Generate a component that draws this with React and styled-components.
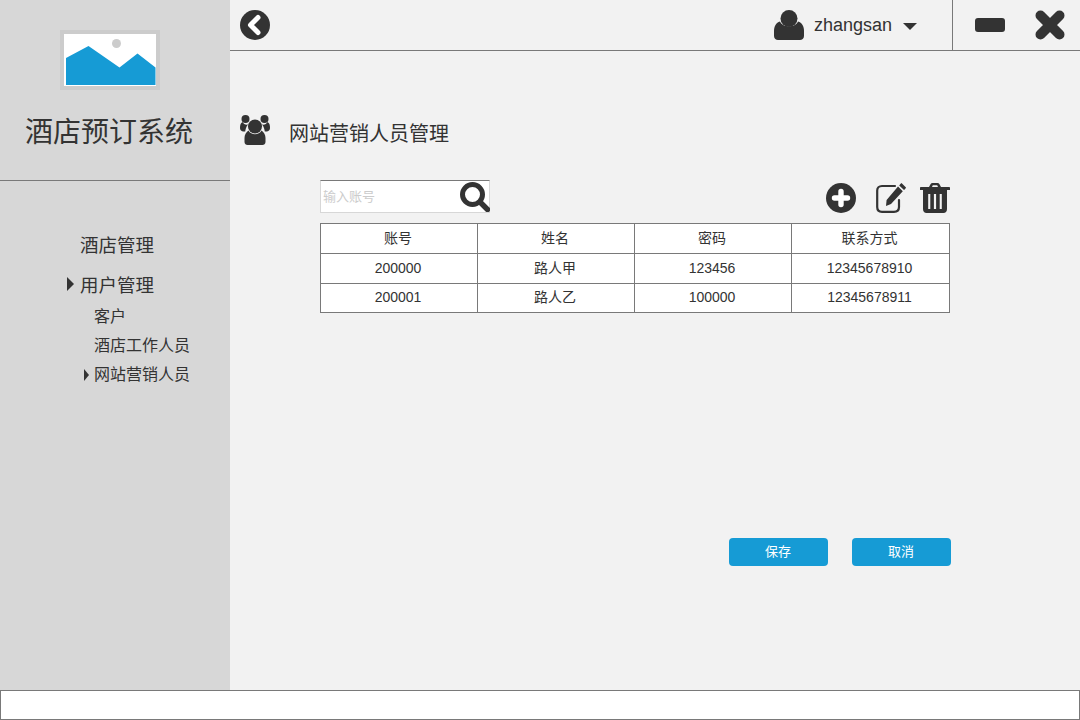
import React from 'react';
import styled, { createGlobalStyle } from 'styled-components';

const rows = [
	['200000', '路人甲', '123456', '12345678910'],
	['200001', '路人乙', '100000', '12345678911'],
];

function App() {
	return (
		<>
			<GlobalStyle />
			<Page>
				<Body>
					<Sidebar>
						<Brand>
							<Logo width='100' height='60' viewBox='0 0 100 60'>
								<rect width='100' height='60' fill='#ccc' />
								<rect x='4' y='4' width='92' height='52' fill='#fff' />
								<circle cx='56.5' cy='13.5' r='4.5' fill='#ccc' />
								<polygon points='6,28 28.5,16 59.5,37.5 77.5,23.5 95.5,37.5 95.5,55 6,55' fill='#169bd5' />
							</Logo>
							<BrandName>酒店预订系统</BrandName>
						</Brand>
						<Menu>
							<MenuItem>酒店管理</MenuItem>
							<MenuItem $active>用户管理</MenuItem>
							<SubMenu>
								<SubItem>客户</SubItem>
								<SubItem>酒店工作人员</SubItem>
								<SubItem $active>网站营销人员</SubItem>
							</SubMenu>
						</Menu>
					</Sidebar>
					<Main>
						<TopBar>
							<BackIcon />
							<UserArea>
								<UserIcon />
								<UserName>zhangsan</UserName>
								<Caret />
							</UserArea>
							<WindowControls>
								<MinimizeButton />
								<CloseIcon />
							</WindowControls>
						</TopBar>
						<Heading>
							<UsersIcon />
							<HeadingText>网站营销人员管理</HeadingText>
						</Heading>
						<Panel>
							<Toolbar>
								<SearchBox>
									<SearchText>输入账号</SearchText>
									<SearchIcon />
								</SearchBox>
								<Actions>
									<PlusIcon />
									<EditIcon />
									<TrashIcon />
								</Actions>
							</Toolbar>
							<Table>
								<colgroup>
									<col width='157' />
									<col width='157' />
									<col width='157' />
									<col width='158' />
								</colgroup>
								<thead>
									<tr>
										<Cell as='th'>账号</Cell>
										<Cell as='th'>姓名</Cell>
										<Cell as='th'>密码</Cell>
										<Cell as='th'>联系方式</Cell>
									</tr>
								</thead>
								<tbody>
									{rows.map((row) => (
										<tr key={row[0]}>
											{row.map((value) => (
												<Cell key={value}>{value}</Cell>
											))}
										</tr>
									))}
								</tbody>
							</Table>
							<Buttons>
								<Button>保存</Button>
								<Button>取消</Button>
							</Buttons>
						</Panel>
					</Main>
				</Body>
				<Footer />
			</Page>
		</>
	);
}

function BackIcon() {
	return (
		<svg width='30' height='30' viewBox='0 0 30 30'>
			<circle cx='15' cy='15' r='15' fill='#333' />
			<polyline points='18,7.5 10.5,15 18,22.5' fill='none' stroke='#fff' strokeWidth='5' strokeLinejoin='round' strokeLinecap='round' />
		</svg>
	);
}

function UserIcon() {
	return (
		<svg width='30' height='30' viewBox='0 0 30 30'>
			<circle cx='15' cy='8.5' r='8.5' fill='#333' />
			<path d='M6 11.5 C9 18 21 18 24 11.5 C28 12.5 30 16.5 30 21 L30 26 C30 28.5 28 30 26 30 L4 30 C2 30 0 28.5 0 26 L0 21 C0 16.5 2 12.5 6 11.5 Z' fill='#333' />
		</svg>
	);
}

function CloseIcon() {
	return (
		<svg width='30' height='30' viewBox='0 0 30 30'>
			<path d='M5.5 5.5 L24.5 24.5 M24.5 5.5 L5.5 24.5' stroke='#333' strokeWidth='10' strokeLinecap='round' />
		</svg>
	);
}

function UsersIcon() {
	return (
		<svg width='30' height='30' viewBox='0 0 30 30'>
			<g fill='#333'>
				<circle cx='5.5' cy='4' r='4' />
				<circle cx='24.5' cy='4' r='4' />
				<path d='M2.5 7 C0.5 8 0 10 0 13 C0 15 1 16 3 16.5 L5.2 16.5 C5.5 14.5 6 12 8 9.5 C5.5 10 3.5 9 2.5 7 Z' />
				<path d='M27.5 7 C29.5 8 30 10 30 13 C30 15 29 16 27 16.5 L24.8 16.5 C24.5 14.5 24 12 22 9.5 C24.5 10 26.5 9 27.5 7 Z' />
				<circle cx='15' cy='11.5' r='7' />
				<path d='M8.5 15.5 C11 20.5 19 20.5 21.5 15.5 C24 17 25.5 20 25.5 23 L25.5 27 C25.5 29 24 30 22.5 30 L7.5 30 C6 30 4.5 29 4.5 27 L4.5 23 C4.5 20 6 17 8.5 15.5 Z' />
			</g>
		</svg>
	);
}

function SearchIcon() {
	return (
		<svg width='30' height='30' viewBox='0 0 30 30'>
			<circle cx='12.5' cy='12.5' r='10' fill='none' stroke='#333' strokeWidth='5' />
			<path d='M20.5 20.5 L27.5 27.5' stroke='#333' strokeWidth='5.4' strokeLinecap='round' />
		</svg>
	);
}

function PlusIcon() {
	return (
		<svg width='30' height='30' viewBox='0 0 30 30'>
			<circle cx='15' cy='15' r='15' fill='#333' />
			<path d='M15 8.5 L15 21.5 M8.5 15 L21.5 15' stroke='#fff' strokeWidth='5.4' strokeLinecap='round' />
		</svg>
	);
}

function EditIcon() {
	return (
		<svg width='30' height='30' viewBox='0 0 30 30'>
			<path d='M19 3 L6 3 C3 3 1.2 5 1.2 7.5 L1.2 24 C1.2 27 3 28.8 6 28.8 L18 28.8 C21 28.8 23 27 23 24 L23 17' fill='none' stroke='#333' strokeWidth='2.2' strokeLinecap='round' />
			<path d='M25.5 0 L30 4.5 C30 5.2 28.8 6.4 28 7 L23.2 2.4 C24 1.5 24.8 0.6 25.5 0 Z M22 3.6 L26.8 8.2 L15 21 L10 23 L10.6 17 Z' fill='#333' />
		</svg>
	);
}

function TrashIcon() {
	return (
		<svg width='30' height='30' viewBox='0 0 30 30'>
			<path fillRule='evenodd' fill='#333' d='M9 4 L10.5 1.2 C11 0.4 11.6 0 12.5 0 L17.5 0 C18.4 0 19 0.4 19.5 1.2 L21 4 L29 4 C29.6 4 30 4.4 30 5 L30 7 L0 7 L0 5 C0 4.4 0.4 4 1 4 Z M12 4 L18 4 L17.2 2.2 L12.8 2.2 Z M3 7 L27 7 L27 26 C27 28.5 25.5 30 23.5 30 L6.5 30 C4.5 30 3 28.5 3 26 Z M8.2 11 L8.2 26 L10.3 26 L10.3 11 Z M13.9 11 L13.9 26 L16.1 26 L16.1 11 Z M19.7 11 L19.7 26 L21.8 26 L21.8 11 Z' />
		</svg>
	);
}

const GlobalStyle = createGlobalStyle`
	html, body {
		margin: 0;
		padding: 0;
	}
	body {
		font-family: 'Liberation Sans', 'Noto Sans CJK SC', sans-serif;
		color: #333;
	}
	svg {
		display: block;
		flex: none;
	}
`;

const Page = styled.div`
	width: 1080px;
	height: 720px;
	display: flex;
	flex-direction: column;
	overflow: hidden;
`;

const Body = styled.div`
	height: 690px;
	display: flex;
`;

const Sidebar = styled.aside`
	width: 230px;
	background: #d7d7d7;
`;

const Brand = styled.div`
	height: 150px;
	padding-top: 30px;
	border-bottom: 1px solid #797979;
`;

const Logo = styled.svg`
	margin-left: 60px;
`;

const BrandName = styled.div`
	margin: 23px 0 0 25px;
	font-size: 28px;
	line-height: 40px;
`;

const Menu = styled.nav`
	padding: 52px 0 0 80px;
`;

const MenuItem = styled.div`
	position: relative;
	font-size: 18.5px;
	line-height: 26px;
	margin-bottom: 14px;
	${(p) =>
		p.$active &&
		`
		&::before {
			content: '';
			position: absolute;
			left: -13px;
			top: 4px;
			border-style: solid;
			border-width: 7px 0 7px 7px;
			border-color: transparent transparent transparent #333;
		}
	`}
`;

const SubMenu = styled.div`
	padding-left: 14px;
	margin-top: -11px;
`;

const SubItem = styled.div`
	position: relative;
	font-size: 16px;
	line-height: 29px;
	${(p) =>
		p.$active &&
		`
		&::before {
			content: '';
			position: absolute;
			left: -10px;
			top: 9px;
			border-style: solid;
			border-width: 6px 0 6px 5px;
			border-color: transparent transparent transparent #333;
		}
	`}
`;

const Main = styled.main`
	flex: 1;
	background: #f2f2f2;
`;

const TopBar = styled.header`
	height: 50px;
	display: flex;
	align-items: center;
	padding-left: 10px;
	border-bottom: 1px solid #797979;
`;

const UserArea = styled.div`
	display: flex;
	align-items: center;
	margin-left: auto;
	padding-right: 35px;
`;

const UserName = styled.span`
	font-size: 18px;
	margin: 0 11px 0 10px;
`;

const Caret = styled.span`
	width: 0;
	height: 0;
	margin-top: 3px;
	border-style: solid;
	border-width: 7px 7px 0 7px;
	border-color: #333 transparent transparent transparent;
`;

const WindowControls = styled.div`
	height: 50px;
	display: flex;
	align-items: center;
	gap: 30px;
	padding: 0 15px 0 22px;
	border-left: 1px solid #797979;
`;

const MinimizeButton = styled.span`
	width: 30px;
	height: 14px;
	background: #333;
	border-radius: 3px;
`;

const Heading = styled.div`
	display: flex;
	align-items: center;
	height: 30px;
	margin-top: 64px;
	padding-left: 10px;
`;

const HeadingText = styled.h1`
	margin: 4px 0 0 19px;
	font-size: 20px;
	font-weight: 400;
`;

const Panel = styled.section`
	width: 631px;
	margin: 35px 0 0 90px;
`;

const Toolbar = styled.div`
	width: 630px;
	height: 33px;
	display: flex;
	justify-content: space-between;
	margin-bottom: 10px;
`;

const SearchBox = styled.div`
	width: 170px;
	box-sizing: border-box;
	display: flex;
	align-items: center;
	justify-content: space-between;
	background: #fff;
	border: 1px solid #d7d7d7;
	border-top: 1px solid #797979;
	svg {
		margin-right: -1px;
	}
`;

const SearchText = styled.span`
	margin: 0 0 2px 2px;
	font-size: 13px;
	color: #ccc;
`;

const Actions = styled.div`
	display: flex;
	align-items: flex-end;
	gap: 14px;
	svg:first-child {
		margin-right: 6px;
	}
`;

const Table = styled.table`
	width: 630px;
	table-layout: fixed;
	border-collapse: collapse;
	background: #fff;
`;

const Cell = styled.td`
	box-sizing: content-box;
	height: 27px;
	padding: 0 2px 2px 0;
	border: 1px solid #797979;
	font-size: 14px;
	line-height: 20px;
	font-weight: 400;
	text-align: center;
	color: #333;
	tbody tr:last-child & {
		height: 26px;
	}
`;

const Buttons = styled.div`
	display: flex;
	justify-content: flex-end;
	gap: 24px;
	margin-top: 225px;
`;

const Button = styled.button`
	width: 99px;
	height: 28px;
	padding: 0 1px 3px 0;
	border: none;
	border-radius: 4px;
	background: #169bd5;
	color: #fff;
	font-family: inherit;
	font-size: 13px;
`;

const Footer = styled.footer`
	height: 30px;
	box-sizing: border-box;
	background: #fff;
	border: 1px solid #797979;
`;

export default App;
